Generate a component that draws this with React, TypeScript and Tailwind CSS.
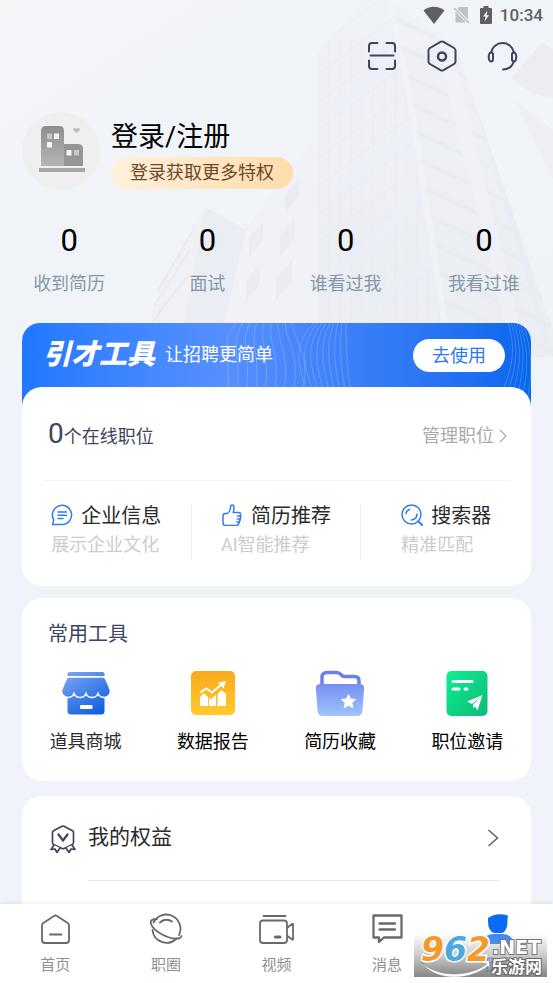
import type { ReactNode } from "react";

function Skyline() {
  const floors = Array.from({ length: 15 }, (_, i) => i);
  return (
    <svg
      aria-hidden="true"
      viewBox="0 0 553 357"
      preserveAspectRatio="xMaxYMin slice"
      className="absolute inset-x-0 top-0 h-[357px] w-full"
    >
      <defs>
        <linearGradient id="sky" x1="0" y1="0" x2="1" y2="1">
          <stop offset="0" stopColor="#f5f5f8" />
          <stop offset="0.35" stopColor="#f0f4f9" />
          <stop offset="0.7" stopColor="#f1f4f9" />
          <stop offset="1" stopColor="#eef1f7" />
        </linearGradient>
        <linearGradient id="face" x1="0" y1="0" x2="0" y2="1">
          <stop offset="0" stopColor="#eff2f7" />
          <stop offset="1" stopColor="#ebedf2" />
        </linearGradient>
        <clipPath id="leftFace">
          <path d="M318 53 365 0h25l20 100 40 257H318z" />
        </clipPath>
        <clipPath id="rightFace">
          <path d="M390 0 455 45 553 330v27H450L410 100z" />
        </clipPath>
      </defs>
      <path d="M0 0h553v357H0z" fill="url(#sky)" />
      <path d="M318 53 365 0h25l65 45 98 285v27H318z" fill="url(#face)" />
      <g clipPath="url(#leftFace)" fill="none" opacity="0.6">
        {floors.map((i) => (
          <path key={i} d={`M300 ${60 + i * 28} 460 ${-60 + i * 28}`} stroke="#e5e8ee" strokeWidth="1" />
        ))}
        {floors.map((i) => (
          <path key={i} d={`M${318 + i * 11} 40V357`} stroke="#e8eaf1" strokeWidth="1" />
        ))}
        <path d="M332 110 400 55M340 190 420 125M335 270 430 190M345 330 440 250" stroke="#eaeefa" strokeWidth="12" strokeDasharray="9 4" />
      </g>
      <g clipPath="url(#rightFace)" fill="none" opacity="0.6">
        {floors.map((i) => (
          <path key={i} d={`M390 ${-10 + i * 26} 560 ${70 + i * 26}`} stroke="#e6e9ef" strokeWidth="4" />
        ))}
        <path d="M440 30 520 357" stroke="#f0f2f8" strokeWidth="14" />
        <path d="M460 45 550 350" stroke="#e6ebf5" strokeWidth="5" />
      </g>
      <path d="m390 0 20 100 40 257" fill="none" stroke="#f1f3f8" strokeWidth="6" opacity="0.7" />
      <path d="m512 78 30-36 11 8v48l-20-4z" fill="#ebedf1" />
      <path d="m515 100 38 30v50l-20-40z" fill="#edeff4" />
      <path d="m318 135-72 95-50 127h122z" fill="#f0f2f7" />
      <path d="m318 135-72 95M318 160l-60 78" fill="none" stroke="#eceff4" />
      <path d="m285 195 14-17v18l-14 18zM249 238l14-16v18l-14 18zM280 235l15-17v20l-15 18zM246 280l14-16v20l-14 16zM276 278l16-18v22l-16 18z" fill="#eaecf1" />
      <path d="m205 207 41 23-30 127h-42z" fill="#eaedf3" />
      <path d="m205 207-45 80-20 70h38z" fill="#eff1f6" />
      <path d="m195 227-38 65M190 250l-36 56M188 275l-38 50" fill="none" stroke="#e9ebf0" strokeWidth="2" />
    </svg>
  );
}

function StatusBar() {
  return (
    <div className="flex h-[30px] items-center justify-end pr-[10px] text-[#5f6063]">
      <svg width="22" height="18" viewBox="0 0 22 18" aria-hidden="true">
        <path d="M11 18 .5 4.500C6.500-.5 15.500-.5 21.500 4.500z" fill="currentColor" />
      </svg>
      <svg width="18" height="18" viewBox="0 0 18 18" className="ml-[8px]" aria-hidden="true">
        <path d="M6 1h9v12.500L4.500 3zM2.500 5.500 13 16.500H2.500z" fill="#c0c2c6" />
        <path d="m1 2 15 15" stroke="#b4b6ba" strokeWidth="1.300" />
      </svg>
      <svg width="12" height="18" viewBox="0 0 12 18" className="ml-[9px]" aria-hidden="true">
        <path d="M3.500 0h5v2H11a1 1 0 0 1 1 1v14a1 1 0 0 1-1 1H1a1 1 0 0 1-1-1V3a1 1 0 0 1 1-1h2.500z" fill="currentColor" />
        <path d="M7.500 4.500 3 10.500h2.500L4.500 15.500 9 9.300H6.500z" fill="#f4f5f8" />
      </svg>
      <span className="ml-[8px] text-[17px] leading-[24px] font-medium">10:34</span>
    </div>
  );
}

function HeaderActions() {
  return (
    <div className="flex h-[52px] items-center justify-end gap-[30px] pr-[35px] text-[#3f4560]">
      <button type="button" aria-label="扫一扫">
        <svg width="30" height="30" viewBox="0 0 30 30" fill="none" stroke="currentColor" strokeWidth="2" strokeLinecap="round" aria-hidden="true">
          <path d="M2 10.500V5a3 3 0 0 1 3-3h5.500M19.500 2H25a3 3 0 0 1 3 3v5.500M2 19.500V25a3 3 0 0 0 3 3h5.500M19.500 28H25a3 3 0 0 0 3-3v-5.500M3.500 14.500h23" />
        </svg>
      </button>
      <button type="button" aria-label="设置">
        <svg width="30" height="32" viewBox="0 0 30 32" fill="none" stroke="currentColor" strokeWidth="2" strokeLinejoin="round" aria-hidden="true">
          <path d="M13.500 1.900q1.500-.8 3 0L27 8q1.500.9 1.500 2.500v11Q28.500 23.100 27 24l-10.500 6.100q-1.500.8-3 0L3 24q-1.500-.9-1.500-2.500v-11Q1.500 8.900 3 8z" />
          <circle cx="15" cy="16.500" r="4" strokeWidth="2.500" />
        </svg>
      </button>
      <button type="button" aria-label="客服">
        <svg width="31" height="31" viewBox="0 0 31 31" fill="none" stroke="currentColor" strokeWidth="2" strokeLinecap="round" aria-hidden="true">
          <path d="M4 11.500a11.700 11.700 0 0 1 23 0M27 20c-1.500 5-5.500 8.500-11 8.500" />
          <path d="M4 11.500c-3 .5-3 8.500 0 9 1.800 0 2-1 2-2v-5c0-1-.2-2-2-2zM27 11.500c3 .5 3 8.500 0 9-1.800 0-2-1-2-2v-5c0-1 .2-2 2-2z" />
        </svg>
      </button>
    </div>
  );
}

function Avatar() {
  return (
    <svg width="78" height="78" viewBox="0 0 78 78" aria-hidden="true" className="shrink-0">
      <defs>
        <linearGradient id="bldg" x1="0" y1="0" x2="0" y2="1">
          <stop offset="0" stopColor="#8d8d8d" />
          <stop offset="1" stopColor="#b5b5b5" />
        </linearGradient>
      </defs>
      <circle cx="39" cy="39" r="39" fill="#efefef" />
      <path d="M19 54V19q0-5 5-5h13q5 0 5 5v35z" fill="url(#bldg)" />
      <path d="M42 54V32h14q5 0 5 5v17z" fill="#959595" />
      <path d="M17 56h46v4H17z" fill="#a6a6a6" />
      <path d="M32 21.500h5v5.500h-5zM25 30h5v5.500h-5zM44.500 38h5v5.500h-5z" fill="#f3f3f3" />
      <path d="M25 21.500h5V27h-5zM52 38h5v5.500h-5z" fill="#c6c6c6" />
      <path d="m54.500 21-3-2.500q-1-2.500 1-2.500 1.500 0 2 1 .5-1 2-1 2 0 1 2.500z" fill="#bdbdbd" />
    </svg>
  );
}

function BannerWaves() {
  const lines = Array.from({ length: 9 }, (_, i) => i);
  return (
    <svg aria-hidden="true" viewBox="0 0 509 84" preserveAspectRatio="none" className="absolute inset-0 h-full w-full" fill="none" stroke="#ffffff" strokeOpacity="0.2" strokeWidth="1">
      {lines.map((i) => (
        <path key={`a${i}`} d={`M${214 + i * 7} 0C${196 + i * 10} ${20 + i} ${212 + i * 10} 34 ${204 + i * 9} 84`} />
      ))}
      {lines.map((i) => (
        <path key={`b${i}`} d={`M${292 + i * 4} 0C${268 + i * 7} 24 ${276 + i * 6} 46 ${292 + i * 5} 84`} />
      ))}
      {lines.map((i) => (
        <path key={`c${i}`} d={`M${486 + i * 3} 0C${494 + i * 3} 26 ${492 + i * 4} 44 ${474 + i * 6} 84`} />
      ))}
    </svg>
  );
}

const stats = [
  { label: "收到简历", value: 0 },
  { label: "面试", value: 0 },
  { label: "谁看过我", value: 0 },
  { label: "我看过谁", value: 0 },
];

const services: { title: string; note: string; icon: ReactNode }[] = [
  {
    title: "企业信息",
    note: "展示企业文化",
    icon: (
      <>
        <path d="M1.500 20.500h9.500a9.600 9.600 0 1 0-8.200-4.600z" />
        <path d="M7 8h8.500M7 11.300h8.500M7 14.500h5" />
      </>
    ),
  },
  {
    title: "简历推荐",
    note: "AI智能推荐",
    icon: (
      <path d="M6.500 9.500C8.500 8 9.500 6 9.500 3c0-3 3.500-2.500 3.500.5 0 2-.3 3.500-.8 5h5.300c2 0 2.300 1.500 2 3 .5 1 .3 2-.3 2.800.3 1 0 2-.7 2.700.2 1.200-.2 2-1 2.500 0 1.200-.7 2-2 2H4.500q-2.500 0-2.500-2.500v-7q0-2.500 2.500-2.500zM16.500 12h3M16.500 15h2.500M16 18h2" />
    ),
  },
  {
    title: "搜索器",
    note: "精准匹配",
    icon: (
      <>
        <circle cx="10.500" cy="10.500" r="9.500" />
        <path d="m17.200 17.200 4.300 4.300" strokeWidth="2" />
        <path d="M5 9.500Q5.500 6.500 8.500 5.500M16 10q0 5-5.500 6" />
      </>
    ),
  },
];

const tools: { label: string; tone: string; icon: ReactNode }[] = [
  {
    label: "道具商城",
    tone: "text-[#2b2b2b]",
    icon: (
      <>
        <defs>
          <linearGradient id="shop" gradientUnits="userSpaceOnUse" x1="8" y1="0" x2="34" y2="44">
            <stop offset="0" stopColor="#7aa4f6" />
            <stop offset="1" stopColor="#1160dd" />
          </linearGradient>
        </defs>
        <path d="M7.500 1h33q2 0 2 2v2h-37V3q0-2 2-2zM5.500 22h37v18q0 3.500-3.500 3.500H9q-3.500 0-3.500-3.500z" fill="url(#shop)" />
        <path d="M5.500 6h37q4 7 6 13.500 0 6-6 7-5 0-6.500-4-1.500 4-6 4t-6-4q-1.500 4-6 4t-6-4q-1.500 4-6.500 4-6-1-6-7 2-6.500 6-13.500z" fill="url(#shop)" stroke="#fff" strokeWidth="1.500" />
        <rect x="18" y="34" width="12.500" height="4" rx="1" fill="#fff" />
      </>
    ),
  },
  {
    label: "数据报告",
    tone: "text-black",
    icon: (
      <>
        <defs>
          <linearGradient id="chart" x1="0" y1="0" x2="0" y2="1">
            <stop offset="0" stopColor="#f9a91d" />
            <stop offset="1" stopColor="#ffcb2d" />
          </linearGradient>
        </defs>
        <rect x="2" y="0" width="44" height="44" rx="5" fill="url(#chart)" />
        <path d="M11 26l3.500-3.500h1L19 26v9h-8zM20 27l2 1 5-4v11h-7zM28.500 23l4-4 4.500 4v12h-8.500z" fill="#fff" />
        <path d="m11 21.500 6.500-4 5.500 4L33 13" stroke="#fff" strokeWidth="2" fill="none" />
        <path d="m29 11.500 8-1.500-2.500 7.500z" fill="#fff" />
      </>
    ),
  },
  {
    label: "简历收藏",
    tone: "text-black",
    icon: (
      <>
        <defs>
          <linearGradient id="folder" x1="0" y1="0" x2="0" y2="1">
            <stop offset="0" stopColor="#7590f2" />
            <stop offset="1" stopColor="#9fc5fd" />
          </linearGradient>
        </defs>
        <path d="M6 16V6.500q0-5 5-5h9.500q2 0 3.500 1.300l2 1.800q1 .9 3 .9h9.500q4.500 0 4.500 4.500v6" fill="none" stroke="#6c80e8" strokeWidth="3.500" />
        <path d="M4.500 13h39q5 0 4.600 5l-1.700 22q-.4 5-5.400 5H7q-5 0-5.400-5L-.1 18q-.4-5 4.600-5z" fill="url(#folder)" />
        <path d="m32.500 23.500 2 4.500 5 .5-3.700 3.300 1 4.900-4.300-2.500-4.300 2.500 1-4.900-3.700-3.300 5-.5z" fill="#fff" stroke="#fff" strokeLinejoin="round" />
      </>
    ),
  },
  {
    label: "职位邀请",
    tone: "text-black",
    icon: (
      <>
        <defs>
          <linearGradient id="invite" x1="0" y1="0" x2="1" y2="1">
            <stop offset="0" stopColor="#0bf090" />
            <stop offset="1" stopColor="#0fb978" />
          </linearGradient>
        </defs>
        <rect x="3.500" y="0" width="41" height="45" rx="5" fill="url(#invite)" />
        <path d="M10 10.500h19M10 18h6M22 18h2" stroke="#fff" strokeWidth="3" strokeLinecap="round" />
        <path d="m39.500 24-15.500 6.500 5 2.500zM39.500 24 34.500 39.500l-2.500-4-2 2v-4z" fill="#fff" />
      </>
    ),
  },
];

const tabs: { label: string; active?: boolean; icon: ReactNode }[] = [
  {
    label: "首页",
    icon: <path d="M3 12.500q0-1.500 1.300-2.400L15 3q1.500-1 3 0l10.700 7.100q1.300.9 1.300 2.400V27q0 3-3 3H6q-3 0-3-3zM11 21.500h11.500" />,
  },
  {
    label: "职圈",
    icon: (
      <>
        <path d="M4.500 9.500A14 14 0 1 1 30 22M27.500 25.500A14 14 0 0 1 3.500 17" />
        <path d="M8 6C3 6 .8 7.500 2 11c2.500 7 17 15.500 27 14.500 2 0 3-1 3.500-2.500M11 9.500c3.500-3.500 8.500-3.500 12-1" />
      </>
    ),
  },
  {
    label: "视频",
    icon: (
      <>
        <path d="M3.500 3h22M3 7.500h21q3 0 3 3V27q0 3-3 3H3q-3 0-3-3V10.500q0-3 3-3zM27 15l5-4q1-.5 1 .5V26q0 1-1 .5l-5-4" />
        <path d="M15.500 24H20" strokeWidth="3" />
      </>
    ),
  },
  {
    label: "消息",
    icon: <path d="M2.500 2.500h28v22H13l-5 4.500v-4.500H2.500zM8.500 10.500H24M8.500 16.500H24" strokeWidth="2.300" />,
  },
  {
    label: "我的",
    active: true,
    icon: (
      <path
        d="M7 5q8-6 20-2.500l-.5 4q.5 11-5.500 13.500h-8Q7 18 7 8zM13 21h8q11 0 11 10H2Q2 21 13 21z"
        fill="#0a6cf5"
        stroke="none"
      />
    ),
  },
];

function SiteMark() {
  return (
    <div className="pointer-events-none absolute right-[6px] bottom-[6px] h-[43px] w-[133px] bg-linear-to-b from-white/20 via-[#a8a8a8]/60 to-[#777777]/90">
      <svg viewBox="0 0 133 43" className="absolute inset-0 h-full w-full" aria-hidden="true">
        <path d="M7 28c14 14 45 17 66 2l-6-1 8-3 1 8-2-2C54 48 20 47 7 28z" fill="#fff" stroke="#777" strokeWidth="0.500" />
      </svg>
      <div className="absolute bottom-[9px] left-[7px] font-['DejaVu_Sans',sans-serif] text-[33px] leading-[36px] font-bold italic [-webkit-text-stroke:3px_white] [paint-order:stroke_fill]">
        <span className="text-[#f39a2d]">9</span>
        <span className="text-[#4da7e0]">6</span>
        <span className="text-[#f39a2d]">2</span>
      </div>
      <div className="absolute top-[4px] left-[78px] font-['DejaVu_Sans',sans-serif] text-[19px] leading-[19px] font-bold text-white [-webkit-text-stroke:2px_#777777] [paint-order:stroke_fill]">
        .NET
      </div>
      <div className="absolute top-[24px] left-[77px] text-[17px] leading-[18px] font-bold text-white [-webkit-text-stroke:2px_#666666] [paint-order:stroke_fill]">
        乐游网
      </div>
    </div>
  );
}

export default function App() {
  return (
    <div className="flex h-screen flex-col bg-[#f0f4fa] font-[Roboto,'Noto_Sans_CJK_SC',sans-serif]">
      <main className="relative min-h-0 flex-1 overflow-y-auto [scrollbar-width:none]">
        <Skyline />
        <header className="relative">
          <StatusBar />
          <HeaderActions />
          <div className="mt-[30px] flex items-center gap-[11px] px-[22px]">
            <Avatar />
            <div className="flex flex-col items-start pt-[4px]">
              <a href="#login" className="text-[27px] leading-[40px] text-black">登录/注册</a>
              <button type="button" className="h-[32px] rounded-full bg-linear-to-r from-[#fff1dc] to-[#ffdcaa] px-[19px] text-[18px] leading-[32px] text-[#6b4a2c]">
                登录获取更多特权
              </button>
            </div>
          </div>
          <dl className="mt-[33px] grid grid-cols-4 pb-[27px] text-center">
            {stats.map((s) => (
              <div key={s.label} className="flex flex-col-reverse gap-[13px]">
                <dt className="text-[18px] leading-[24px] text-[#8797a6]">{s.label}</dt>
                <dd className="text-[31px] leading-[36px] text-black">{s.value}</dd>
              </div>
            ))}
          </dl>
        </header>

        <div className="relative px-[22px]">
          <section>
            <div className="relative h-[84px] overflow-hidden rounded-t-[18px] bg-linear-to-r from-[#1f78ff] via-[#5690ff] via-40% to-[#0566ee]">
              <BannerWaves />
              <div className="relative flex h-[64px] items-center px-[21px] text-white">
                <h2 className="text-[28px] leading-[36px] font-black italic">引才工具</h2>
                <p className="ml-[10px] text-[18px] leading-[24px]">让招聘更简单</p>
                <button type="button" className="mr-[5px] ml-auto h-[33px] w-[92px] rounded-full bg-white text-[18px] leading-[33px] text-[#2d7af0]">
                  去使用
                </button>
              </div>
            </div>
            <div className="relative -mt-[20px] rounded-[20px] bg-white pt-[29px] pb-[26px]">
              <div className="mx-[21px] flex h-[65px] items-start justify-between border-b border-[#f3f3f3] pr-[3px] pl-[5px]">
                <p className="text-[18px] leading-[36px] text-[#3f4560]">
                  <span className="text-[28px]">0</span>个在线职位
                </p>
                <a href="#jobs" className="flex items-center gap-[5px] pt-[2px] text-[18px] leading-[36px] text-[#aaaaaa]">
                  管理职位
                  <svg width="8" height="14" viewBox="0 0 8 14" fill="none" stroke="currentColor" strokeWidth="1.200" aria-hidden="true">
                    <path d="m1 1 6 6-6 6" />
                  </svg>
                </a>
              </div>
              <div className="mt-[24px] grid grid-cols-3 divide-x divide-[#eeeeee]">
                {services.map((s) => (
                  <a key={s.title} href="#service" className="flex h-[55px] justify-center">
                    <span>
                      <span className="flex h-[22px] items-center gap-[8px] text-[20px] leading-[22px] text-[#2b2b2b]">
                        <svg width="22" height="22" viewBox="0 0 22 22" fill="none" stroke="#2f7df0" strokeWidth="1.500" strokeLinecap="round" strokeLinejoin="round" className="-mt-[2px]" aria-hidden="true">
                          {s.icon}
                        </svg>
                        {s.title}
                      </span>
                      <span className="mt-[6px] block text-[18px] leading-[24px] text-[#cccccc]">{s.note}</span>
                    </span>
                  </a>
                ))}
              </div>
            </div>
          </section>

          <section className="mt-[12px] rounded-[20px] bg-white pt-[21px] pb-[27px]">
            <h2 className="px-[26px] text-[20px] leading-[30px] text-[#3f4560]">常用工具</h2>
            <div className="mt-[22px] grid grid-cols-4">
              {tools.map((t) => (
                <a key={t.label} href="#tool" className={`flex flex-col items-center text-[18px] leading-[24px] ${t.tone}`}>
                  <svg width="48" height="46" viewBox="0 0 48 46" className="mb-[13px] overflow-visible" aria-hidden="true">
                    {t.icon}
                  </svg>
                  {t.label}
                </a>
              ))}
            </div>
          </section>

          <section className="mt-[15px] rounded-t-[20px] bg-white pr-[32px] pb-[40px] pl-[28px]">
            <a href="#benefits" className="flex items-center text-[21px] text-[#2b2b2b]">
              <svg width="26" height="28" viewBox="0 0 26 28" fill="none" stroke="#3f4560" strokeWidth="1.700" strokeLinejoin="round" strokeLinecap="round" aria-hidden="true">
                <path d="M12 1.300q1-.5 2 0l8.500 4.500q1 .6 1 1.800v10q0 1.200-1 1.800L14 23.500q-1 .5-2 0l-8.500-4.100q-1-.6-1-1.800v-10q0-1.200 1-1.800z" />
                <path d="m8.500 9.500 4.500 6 4.500-6" strokeWidth="2.200" />
                <path d="m4 20-3 4.500 4-.5 2 3.500L10 23M22 20l3 4.500-4-.5-2 3.500-3-4.500" fill="#fff" />
              </svg>
              <span className="ml-[12px] flex h-[85px] flex-1 items-center justify-between border-b border-[#e6e6e6]">
                我的权益
                <svg width="12" height="18" viewBox="0 0 12 18" fill="none" stroke="#666666" strokeWidth="1.600" aria-hidden="true">
                  <path d="m1.500 1 9 8-9 8" />
                </svg>
              </span>
            </a>
          </section>
        </div>
      </main>

      <nav className="relative grid h-[79px] shrink-0 grid-cols-5 bg-white shadow-[0_-1px_4px_rgba(0,0,0,0.08)]">
        {tabs.map((t) => (
          <a
            key={t.label}
            href="#tab"
            aria-current={t.active ? "page" : undefined}
            className={`flex flex-col items-center pt-[9px] text-[15px] leading-[22px] ${t.active ? "text-[#0a6cf5]" : "text-[#909090]"}`}
          >
            <svg width="33" height="33" viewBox="0 0 33 33" fill="none" stroke="#696969" strokeWidth="1.800" strokeLinejoin="round" strokeLinecap="round" className="mb-[8px] overflow-visible" aria-hidden="true">
              {t.icon}
            </svg>
            {t.label}
          </a>
        ))}
        <SiteMark />
      </nav>
    </div>
  );
}
